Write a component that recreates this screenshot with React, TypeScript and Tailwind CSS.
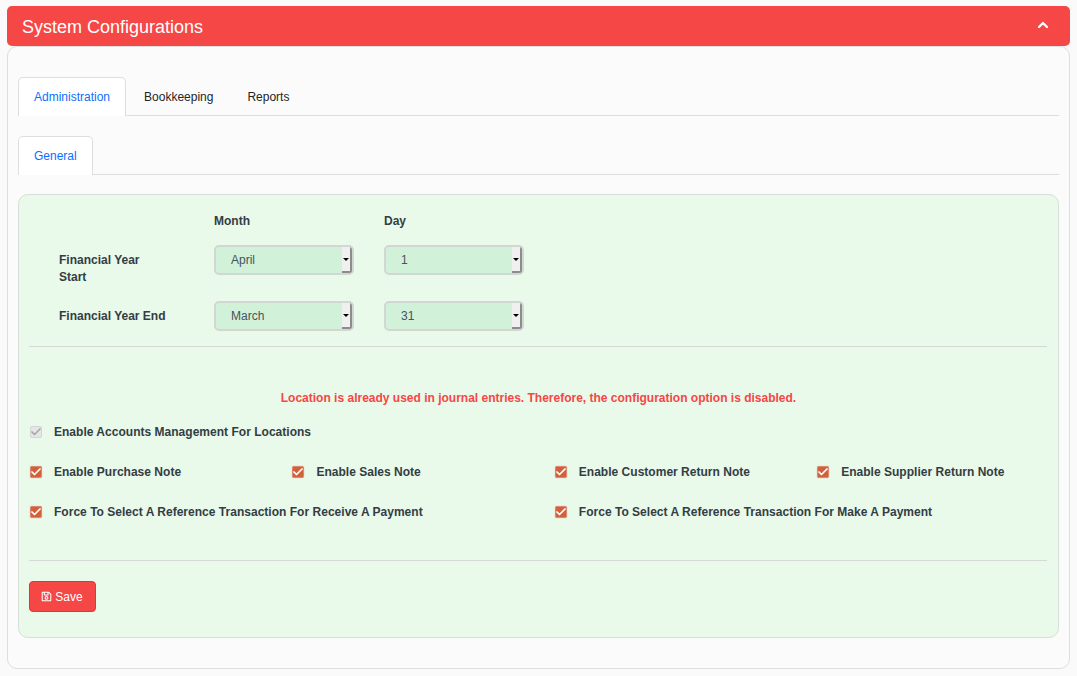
import { Check, ChevronUp } from "lucide-react";
import { FaRegSave } from "react-icons/fa";

function Select({ value }: { value: string }) {
	return (
		<div className="flex h-[30px] w-[140px] overflow-hidden rounded-[5px] border-2 border-[#d3d7d3] bg-[#d2f1d9]">
			<span className="flex-1 pl-[15px] text-[12px] leading-[26px] text-[#47535a]">{value}</span>
			<span className="flex w-[10px] items-center justify-center border-r-2 border-b-2 border-[#8c8c8c] bg-[#f1f0f0]">
				<span className="h-0 w-0 border-x-[3px] border-t-[3px] border-x-transparent border-t-black" />
			</span>
		</div>
	);
}

function CheckItem({ label, disabled }: { label: string; disabled?: boolean }) {
	return (
		<label className="flex h-[14px] items-center">
			<span
				className={
					disabled
						? "ml-[1px] flex h-[12px] w-[12px] items-center justify-center rounded-[2px] border border-[#d5d5d5] bg-[#e6e6e6] text-[#a8a8a8]"
						: "ml-[1px] flex h-[12px] w-[12px] items-center justify-center rounded-[2px] border border-[#d98a70] bg-[#d2603a] text-white shadow-[0_0_1px_#d98a70]"
				}
			>
				<Check className="shrink-0" size={12} strokeWidth={3.5} />
			</span>
			<span className="ml-[12px] text-[12px] font-bold tracking-[0.02px] text-[#333d43]">{label}</span>
		</label>
	);
}

function Tab({ label, active }: { label: string; active?: boolean }) {
	if (active) {
		return (
			<div className="-mb-px flex h-[39px] items-center rounded-t-[5px] border border-b-0 border-[#dedede] bg-white px-[15px] text-[12px] text-[#0d6efd]">
				{label}
			</div>
		);
	}
	return <div className="flex h-[38px] items-center pl-[18px] pr-[16px] pt-[2px] text-[12px] text-[#212529]">{label}</div>;
}

export default function App() {
	return (
		<div className="min-h-[676px] bg-[#fafafa] px-[7px] pt-[6px] pb-[7px] font-['Liberation_Sans',Arial,sans-serif]">
			<div className="flex h-[40px] items-center justify-between rounded-[5px] bg-[#f54745] pl-[15px] pr-[19px] pt-[2px] text-[18px] text-white">
				<span>System Configurations</span>
				<ChevronUp className="-mt-[5px]" size={16} strokeWidth={3.5} />
			</div>

			<div className="h-[623px] rounded-[10px] border border-[#dedede] bg-[#fbfbfb] px-[10px] pt-[30px]">
				<div className="flex border-b border-[#dedede]">
					<Tab label="Administration" active />
					<Tab label="Bookkeeping" />
					<Tab label="Reports" />
				</div>
				<div className="mt-[20px] flex border-b border-[#dedede]">
					<Tab label="General" active />
				</div>

				<div className="mt-[19px] h-[444px] rounded-[10px] border border-[#d8dfd8] bg-[#e9f9ea] pl-[10px] pr-[11px]">
					<div className="grid grid-cols-[185px_170px_140px] pt-[18px] text-[12px] font-bold text-[#333d43]">
						<span />
						<span className="leading-[16px]">Month</span>
						<span className="leading-[16px]">Day</span>
					</div>
					<div className="mt-[16px] grid grid-cols-[185px_170px_140px] items-start">
						<span className="w-[125px] pl-[30px] pt-[7px] text-[12px] font-bold leading-[17px] text-[#333d43]">Financial Year Start</span>
						<Select value="April" />
						<Select value="1" />
					</div>
					<div className="mt-[15px] grid grid-cols-[185px_170px_140px] items-start">
						<span className="pl-[30px] pt-[7px] text-[12px] font-bold leading-[17px] text-[#333d43]">Financial Year End</span>
						<Select value="March" />
						<Select value="31" />
					</div>
					<div className="mt-[15px] border-t border-[#d6d9d6]" />

					<p className="mt-[43px] pl-[1px] text-center text-[12px] font-bold leading-[16px] text-[#f54745]">
						Location is already used in journal entries. Therefore, the configuration option is disabled.
					</p>

					<div className="mt-[19px]">
						<CheckItem label="Enable Accounts Management For Locations" disabled />
					</div>
					<div className="mt-[26px] grid grid-cols-[262.4px_262.4px_262.4px_1fr]">
						<CheckItem label="Enable Purchase Note" />
						<CheckItem label="Enable Sales Note" />
						<CheckItem label="Enable Customer Return Note" />
						<CheckItem label="Enable Supplier Return Note" />
					</div>
					<div className="mt-[26px] grid grid-cols-[524.8px_1fr]">
						<CheckItem label="Force To Select A Reference Transaction For Receive A Payment" />
						<CheckItem label="Force To Select A Reference Transaction For Make A Payment" />
					</div>

					<div className="mt-[41px] border-t border-[#d6d9d6]" />
					<button className="mt-[20px] flex h-[31px] w-[67px] items-center justify-center gap-[3px] rounded-[4px] border border-[#d93a38] bg-[#f54745] pr-[1px] text-[12px] text-white">
						<FaRegSave size={11} />
						Save
					</button>
				</div>
			</div>
		</div>
	);
}
